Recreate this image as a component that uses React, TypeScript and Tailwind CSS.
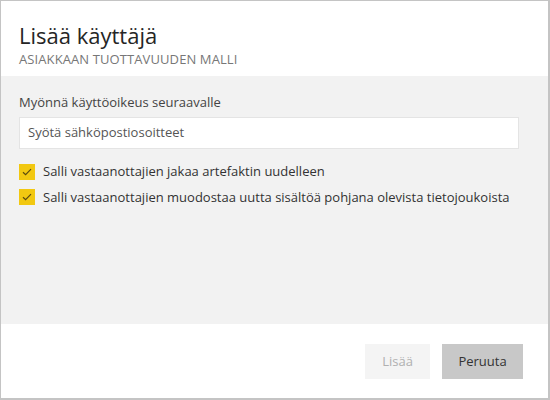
function Check() {
  return (
    <span className="flex h-4 w-4 shrink-0 items-center justify-center bg-[#f2c811]">
      <svg width="10" height="8" viewBox="0 0 10 8" fill="none">
        <path d="M1 4.2 L3.6 6.6 L9 1.2" stroke="#5a4a10" strokeWidth="1.2" />
      </svg>
    </span>
  )
}

export default function App() {
  const font = { fontFamily: '"Segoe UI", "Open Sans", "Noto Sans", sans-serif' }
  return (
    <div
      className="flex h-[400px] w-[550px] flex-col border border-r-2 border-b-2 border-[#c4c4c4] bg-white text-[#333]"
      style={font}
    >
      <div className="h-[75px] px-[18px] pt-[19px]">
        <h1 className="text-[22px] leading-[30px] text-[#252525]">Lisää käyttäjä</h1>
        <div className="mt-[1px] text-[13px] leading-[17px] tracking-[0.1px] text-[#777]">ASIAKKAAN TUOTTAVUUDEN MALLI</div>
      </div>
      <div className="flex flex-1 flex-col bg-[#f2f2f2] px-[18px] pt-[17px]">
        <label className="text-[13px] leading-[18px] text-[#444]">Myönnä käyttöoikeus seuraavalle</label>
        <div className="mt-[6px] flex h-[32px] w-[500px] items-center border border-[#e4e4e4] bg-white px-[8px] text-[13px] text-[#555]">
          Syötä sähköpostiosoitteet
        </div>
        <div className="mt-[13px] flex flex-col gap-[6px] text-[13px] text-[#333]">
          <div className="flex items-center gap-[8px]">
            <Check />
            <span>Salli vastaanottajien jakaa artefaktin uudelleen</span>
          </div>
          <div className="flex items-center gap-[8px]">
            <Check />
            <span>Salli vastaanottajien muodostaa uutta sisältöä pohjana olevista tietojoukoista</span>
          </div>
        </div>
      </div>
      <div className="flex h-[74px] items-start justify-end gap-[12px] pr-[25px] pt-[20px]">
        <button className="h-[35px] w-[65px] bg-[#f4f4f4] text-[13px] text-[#b0b0b0]">Lisää</button>
        <button className="h-[35px] w-[81px] bg-[#c8c8c8] text-[13px] text-[#333]">Peruuta</button>
      </div>
    </div>
  )
}
